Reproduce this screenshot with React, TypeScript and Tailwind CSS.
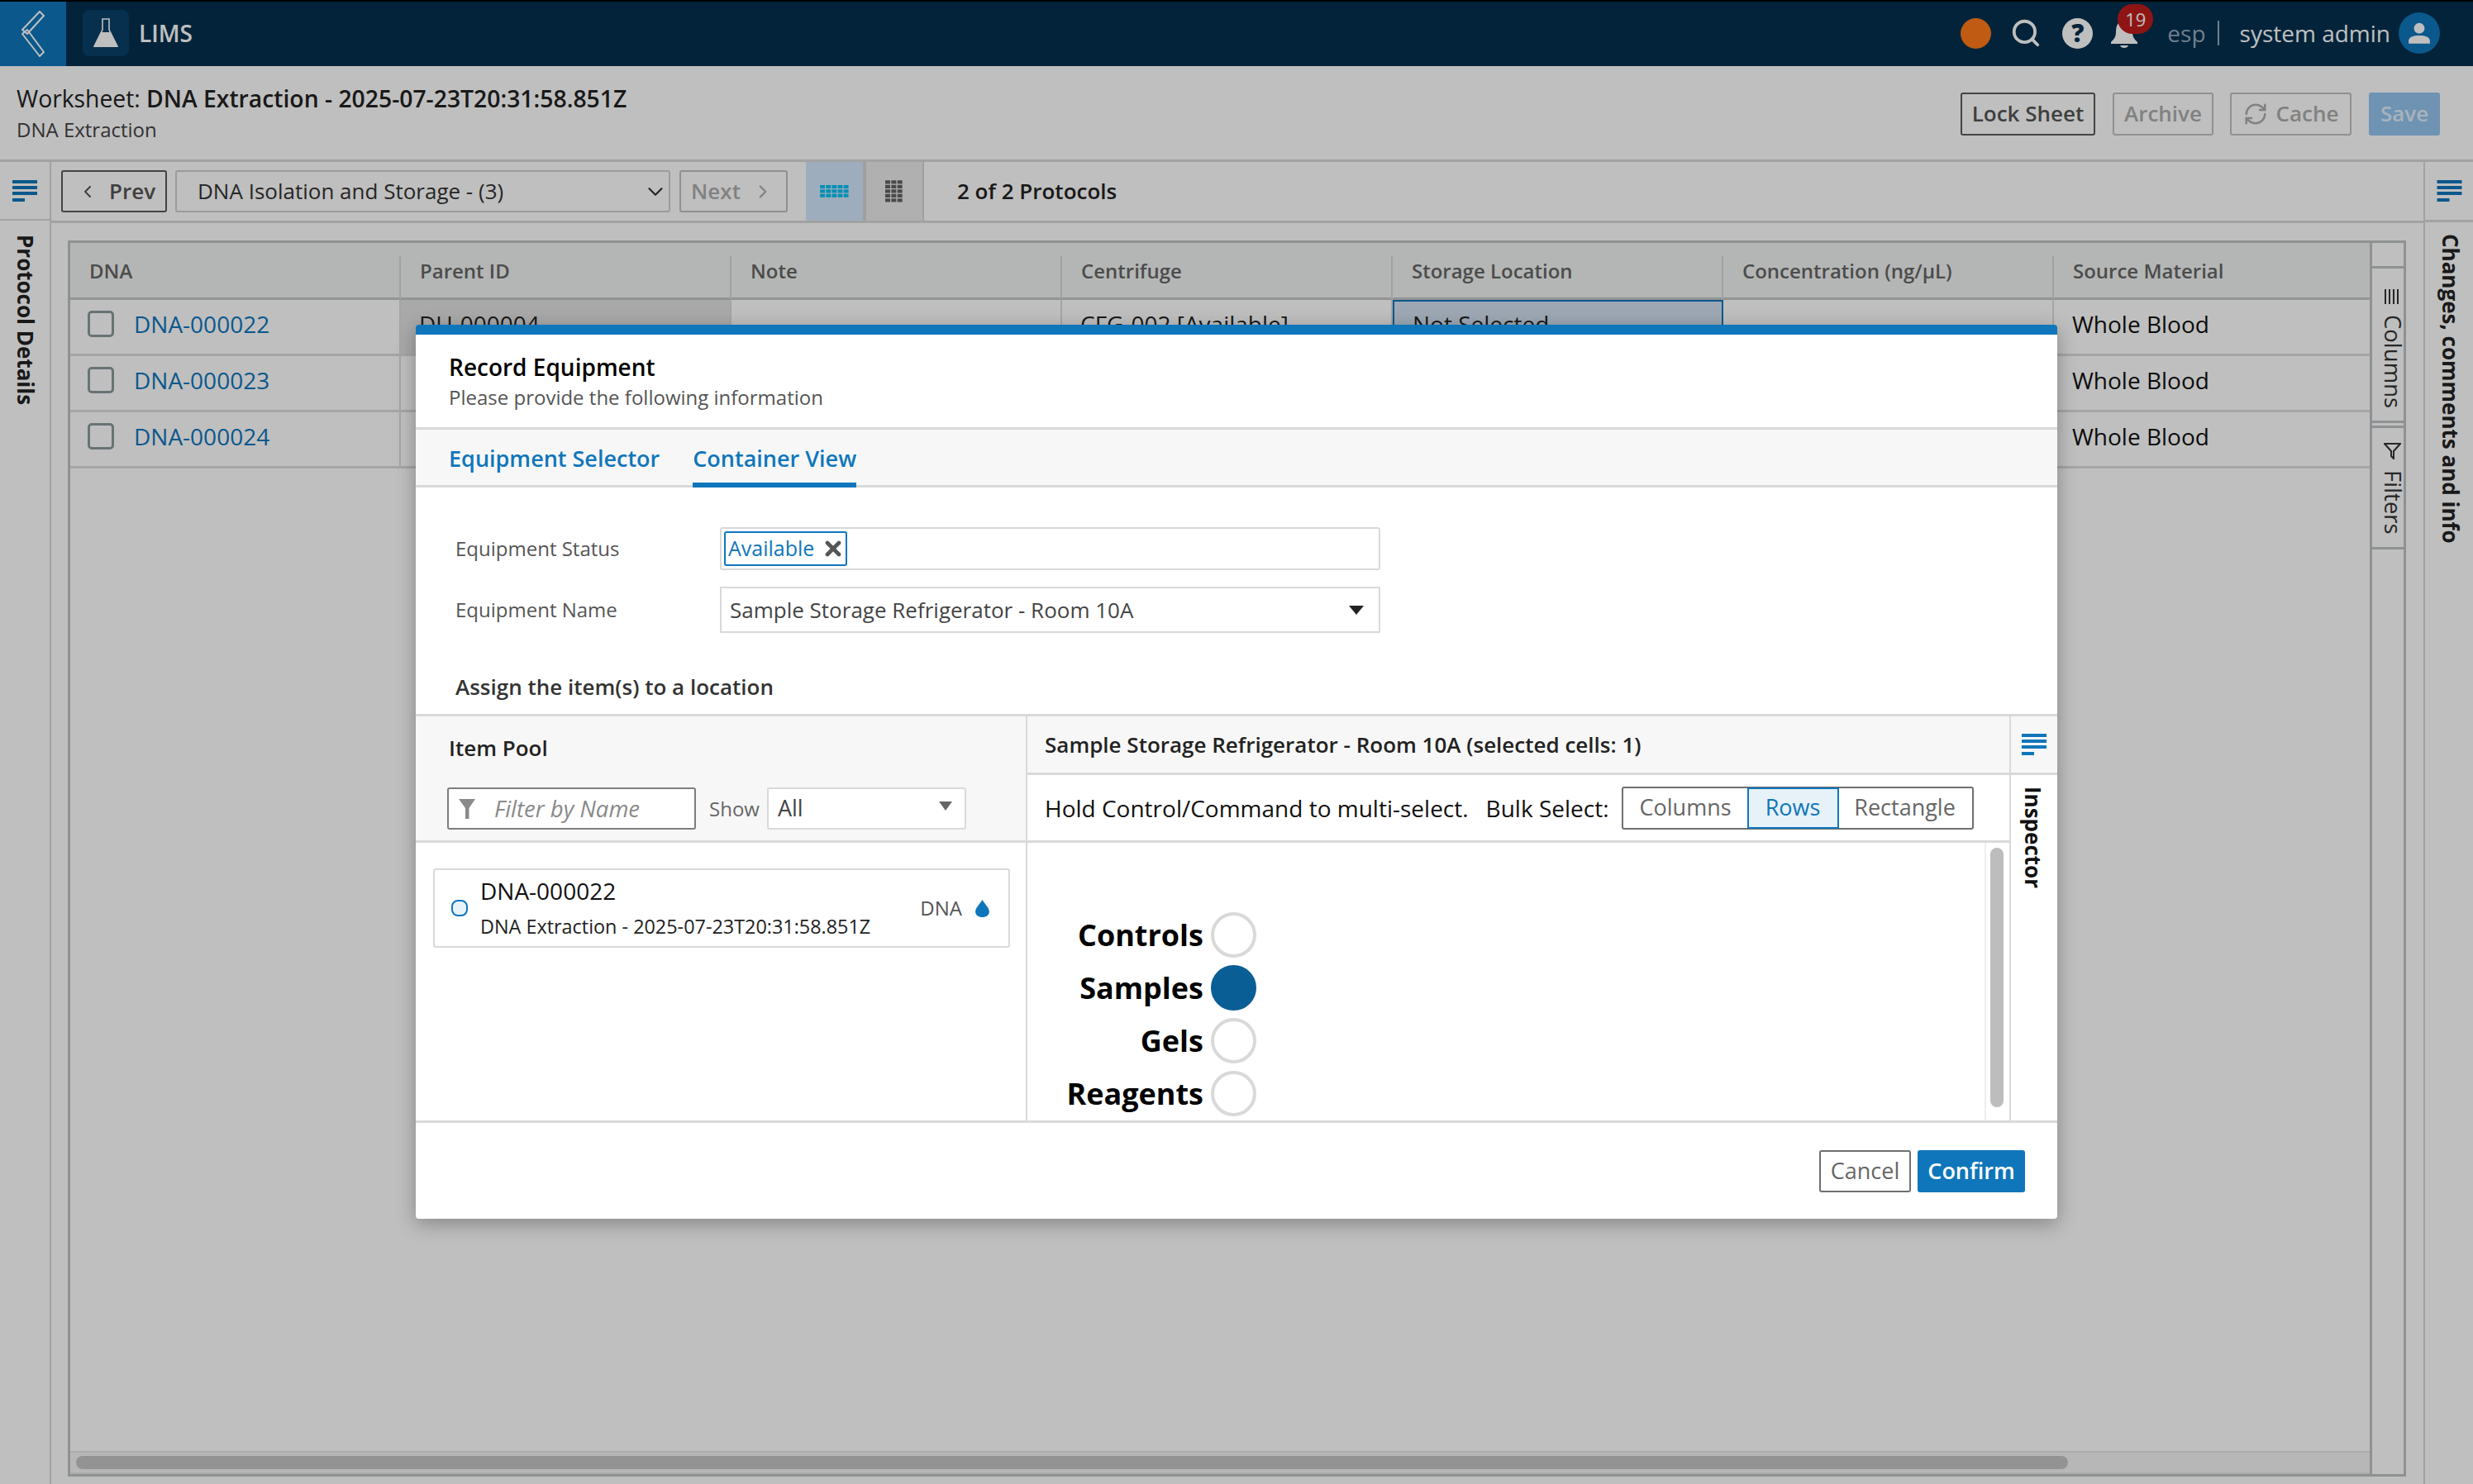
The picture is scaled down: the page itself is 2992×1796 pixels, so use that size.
import { ChevronDown, ChevronLeft, ChevronRight, RefreshCw, Search, X } from 'lucide-react';

const columns = ['DNA', 'Parent ID', 'Note', 'Centrifuge', 'Storage Location', 'Concentration (ng/µL)', 'Source Material'];
const rows = ['DNA-000022', 'DNA-000023', 'DNA-000024'];
const plates = [
  { label: 'Controls', on: false },
  { label: 'Samples', on: true },
  { label: 'Gels', on: false },
  { label: 'Reagents', on: false },
];

const MenuLines = ({ className }: { className: string }) => (
  <svg viewBox="0 0 30 26" className={className} fill="currentColor">
    <rect x="0" y="0" width="30" height="4" />
    <rect x="0" y="7" width="30" height="4" />
    <rect x="0" y="14" width="30" height="4" />
    <rect x="0" y="22" width="15" height="4" />
  </svg>
);

const DotGrid = ({ cols, rowCount, className }: { cols: number; rowCount: number; className: string }) => (
  <svg viewBox={`0 0 ${cols * 8} ${rowCount * 6}`} className={className} fill="currentColor">
    {Array.from({ length: cols * rowCount }).map((_, i) => (
      <rect key={i} x={(i % cols) * 8} y={Math.floor(i / cols) * 6} width="6.6" height="4.6" />
    ))}
  </svg>
);

const App = () => {
  return (
    <div className="relative w-[2992px] h-[1796px] overflow-hidden bg-white flex flex-col font-['Open_Sans',sans-serif] text-[27px] text-[#222]">
      {/* Top bar */}
      <div className="h-[80px] shrink-0 flex items-center bg-[#032f4d] border-t-2 border-black">
        <div className="w-[80px] h-full bg-[#0f76bb] flex items-center justify-center">
          <svg viewBox="0 0 30 56" className="w-[30px] h-[56px] mr-[3px]" fill="none" stroke="#fff" strokeWidth="2" strokeLinejoin="round">
            <path d="M24 1 L29 6 L9 28 L3 23 Z" />
            <path d="M3 28 L9 23 L29 50 L24 55 Z" />
          </svg>
        </div>
        <div className="ml-[20px] mb-[2px] w-[56px] h-[56px] rounded-[8px] bg-[#084069] flex items-center justify-center">
          <svg viewBox="0 0 30 36" className="w-[30px] h-[36px]">
            <path d="M11 1 H19 V14 L29 34 H1 L11 14 Z" fill="none" stroke="#fff" strokeWidth="1.6" />
            <path d="M9 17 H21 L29.5 35 H0.5 Z" fill="#fff" />
          </svg>
        </div>
        <span className="ml-[12px] mb-[2px] text-[28px] font-semibold text-white">LIMS</span>

        <div className="ml-auto mb-[2px] flex items-center pr-[40px]">
          <span className="w-[37px] h-[37px] rounded-full bg-[#ff7a18]" />
          <Search className="ml-[23px] w-[38px] h-[38px] text-white" strokeWidth={2.4} />
          <span className="ml-[25px] w-[37px] h-[37px] rounded-full bg-white flex items-center justify-center text-[30px] font-extrabold text-[#032f4d] leading-none">
            ?
          </span>
          <div className="relative ml-[21px] w-[34px] h-[36px] mt-[2px]">
            <svg viewBox="0 0 34 36" className="w-[34px] h-[36px]" fill="#fff">
              <path d="M17 2 C9 2 7 9 7 16 C7 22 4 25 1 28 V30 H33 V28 C30 25 27 22 27 16 C27 9 25 2 17 2 Z" />
              <path d="M12 32 H22 C21 36 13 36 12 32 Z" />
            </svg>
            <span className="absolute left-[9px] top-[-18px] w-[43px] h-[36px] rounded-full bg-[#bf1b1b] flex items-center justify-center text-[22px] text-white leading-none">
              19
            </span>
          </div>
          <span className="ml-[35px] text-[28px] text-[#94a9bb]">esp</span>
          <span className="ml-[14px] w-[2px] h-[30px] bg-[#94a9bb]" />
          <span className="ml-[25px] text-[28px] text-white">system admin</span>
          <span className="ml-[10px] w-[50px] h-[50px] rounded-full bg-[#0f76bb] flex items-center justify-center">
            <svg viewBox="0 0 24 24" className="w-[28px] h-[28px]" fill="#fff">
              <circle cx="12" cy="7" r="5.5" />
              <path d="M1 23 V20 C1 16 6 14.5 12 14.5 C18 14.5 23 16 23 20 V23 Z" />
            </svg>
          </span>
        </div>
      </div>

      {/* Worksheet header */}
      <div className="h-[116px] shrink-0 flex items-center justify-between pl-[20px] pr-[40px] pt-[2px] border-b-[3px] border-[#d8d8d8]">
        <div className="flex flex-col">
          <div className="text-[28.3px] leading-[37px] text-[#222]">
            Worksheet: <span className="font-semibold">DNA Extraction - 2025-07-23T20:31:58.851Z</span>
          </div>
          <div className="text-[24px] leading-[37px] text-[#444]">DNA Extraction</div>
        </div>
        <div className="flex items-center text-[26px] font-semibold">
          <button className="h-[52px] w-[163px] rounded-[3px] border-2 border-[#5b5b5b] text-[#555]">Lock Sheet</button>
          <button className="ml-[21px] h-[52px] w-[122px] rounded-[3px] border-2 border-[#c0c0c0] text-[#adadad]">Archive</button>
          <button className="ml-[20px] h-[52px] w-[147px] rounded-[3px] border-2 border-[#c0c0c0] text-[#adadad] flex items-center justify-center gap-[10px]">
            <RefreshCw className="w-[30px] h-[30px]" strokeWidth={2} />
            Cache
          </button>
          <button className="ml-[21px] h-[52px] w-[86px] rounded-[3px] bg-[#94c4ef] text-[#e0effb]">Save</button>
        </div>
      </div>

      <div className="flex-1 flex min-h-0">
        {/* Protocol details rail */}
        <div className="w-[62px] shrink-0 flex flex-col border-r-[2px] border-[#d8d8d8]">
          <div className="h-[71px] shrink-0 flex items-center justify-center border-b-[2px] border-[#d8d8d8]">
            <MenuLines className="w-[30px] h-[26px] text-[#0f76bb]" />
          </div>
          <div className="pt-[17px] pr-[12px] [writing-mode:vertical-rl] font-bold text-[26px] leading-[34px] text-[#222]">
            Protocol Details
          </div>
        </div>

        <div className="flex-1 min-w-0 flex flex-col">
          {/* Protocol toolbar */}
          <div className="h-[74px] shrink-0 flex items-stretch border-b-[3px] border-[#d8d8d8] pl-[12px]">
            <div className="flex items-center">
              <button className="h-[51px] w-[128px] rounded-[3px] border-2 border-[#5b5b5b] text-[#555] flex items-center pl-[18px] gap-[14px] font-semibold text-[26px]">
                <ChevronLeft className="w-[24px] h-[24px]" strokeWidth={2} />
                Prev
              </button>
              <div className="ml-[10px] h-[51px] w-[599px] rounded-[3px] border-2 border-[#cfcfcf] flex items-center justify-between pl-[25px] pr-[1px] text-[26px] text-[#333]">
                DNA Isolation and Storage - (3)
                <ChevronDown className="w-[30px] h-[30px]" strokeWidth={1.8} />
              </div>
              <button className="ml-[11px] h-[51px] w-[131px] rounded-[3px] border-2 border-[#c0c0c0] text-[#adadad] flex items-center pl-[12px] gap-[14px] font-semibold text-[26px]">
                Next
                <ChevronRight className="w-[26px] h-[26px]" strokeWidth={2} />
              </button>
            </div>
            <div className="ml-[22px] w-[69px] bg-[#d2e7fc] flex items-center justify-center">
              <DotGrid cols={5} rowCount={3} className="w-[38px] h-[16px] text-[#00c0f0]" />
            </div>
            <div className="w-[74px] bg-[#ebebeb] border-x-[4px] border-r-[2px] border-[#d5d5d5] flex items-center justify-center">
              <DotGrid cols={3} rowCount={5} className="w-[22px] h-[28px] text-[#636363]" />
            </div>
            <div className="ml-[40px] self-center font-semibold text-[26px] text-[#222]">2 of 2 Protocols</div>
          </div>

          {/* Table */}
          <div className="flex-1 min-h-0 pt-[21px] pl-[20px] pr-[21px] pb-[9px]">
            <div className="h-full flex border-[3px] border-[#bfc3c4]">
              <div className="flex-1 min-w-0 flex flex-col">
                <div className="h-[69px] shrink-0 grid grid-cols-[400px_400px_400px_400px_400px_400px_1fr] bg-[#f1f3f2] border-b-[3px] border-[#c3c6c6]">
                  {columns.map((col) => (
                    <div key={col} className="mt-[16px] pl-[23px] border-r-2 border-[#d6d8d8] last:border-r-0 flex items-center pb-[16px] text-[24px] font-semibold text-[#666]">
                      {col}
                    </div>
                  ))}
                </div>
                {rows.map((id, i) => (
                  <div key={id} className="h-[68px] shrink-0 grid grid-cols-[400px_400px_400px_400px_400px_400px_1fr] border-b-[3px] border-[#dcdcdc] text-[28px]">
                    <div className="flex items-center pl-[21px] pb-[8px] border-r-2 border-[#dcdcdc]">
                      <span className="w-[32px] h-[32px] rounded-[5px] border-[3px] border-[#8a9a9c]" />
                      <span className="ml-[24px] text-[#0f76bb]">{id}</span>
                    </div>
                    <div className={`pl-[22px] pb-[8px] flex items-center border-r-2 border-[#dcdcdc] ${i === 0 ? 'bg-[#e2e2e2]' : ''}`}>
                      {i === 0 ? 'DU-000004' : ''}
                    </div>
                    <div className="border-r-2 border-[#dcdcdc]" />
                    <div className="pl-[22px] pb-[8px] flex items-center border-r-2 border-[#dcdcdc]">{i === 0 ? 'CFG-002 [Available]' : ''}</div>
                    <div className={`pl-[22px] pb-[8px] flex items-center ${i === 0 ? 'bg-[#d2e0f0] border-2 border-[#0f76bb]' : 'border-r-2 border-[#dcdcdc]'}`}>
                      {i === 0 ? 'Not Selected' : ''}
                    </div>
                    <div className="border-r-2 border-[#dcdcdc]" />
                    <div className="pl-[22px] pb-[8px] flex items-center text-[#111]">Whole Blood</div>
                  </div>
                ))}
                <div className="flex-1" />
                <div className="h-[28px] shrink-0 bg-[#f5f5f5] border-t-2 border-[#e6e6e6] border-b-2 flex items-center pl-[7px]">
                  <div className="w-[2410px] h-[16px] rounded-full bg-[#c4c4c4]" />
                </div>
              </div>

              {/* Side tabs */}
              <div className="w-[41px] shrink-0 flex flex-col border-l-[3px] border-[#bfc3c4] text-[27.5px] text-[#333]">
                <div className="h-[31px] border-b-[3px] border-[#bfc3c4]" />
                <div className="h-[187px] border-b-[3px] border-[#bfc3c4] flex flex-col items-center pt-[25px] pl-[11px]">
                  <svg viewBox="0 0 21 18" className="w-[21px] h-[18px] shrink-0" stroke="currentColor" strokeWidth="2">
                    <path d="M2 0 V18 M7 0 V18 M12 0 V18 M17 0 V18" />
                  </svg>
                  <span className="mt-[13px] [writing-mode:vertical-rl] leading-[30px]">Columns</span>
                </div>
                <div className="mt-[3px] h-[150px] border-t-[3px] border-b-[3px] border-[#bfc3c4] flex flex-col items-center pt-[18px] pl-[11px]">
                  <svg viewBox="0 0 21 20" className="w-[21px] h-[20px] shrink-0" fill="none" stroke="currentColor" strokeWidth="2">
                    <path d="M1 1 H20 L12 10 V19 L9 16 V10 Z" />
                  </svg>
                  <span className="mt-[13px] [writing-mode:vertical-rl] leading-[30px]">Filters</span>
                </div>
              </div>
            </div>
          </div>
        </div>

        {/* Changes rail */}
        <div className="w-[60px] shrink-0 flex flex-col border-l-[2px] border-[#d8d8d8]">
          <div className="h-[73px] shrink-0 flex items-center justify-center border-b-[3px] border-[#d8d8d8]">
            <MenuLines className="w-[31px] h-[26px] text-[#0f76bb]" />
          </div>
          <div className="pt-[14px] pr-[10px] [writing-mode:vertical-rl] font-bold text-[26px] leading-[34px] text-[#222] whitespace-nowrap">
            Changes, comments and info
          </div>
        </div>
      </div>

      {/* Dim layer */}
      <div className="absolute inset-0 bg-black/25" />

      {/* Record Equipment modal */}
      <div className="absolute left-[503px] top-[393px] w-[1986px] h-[1082px] bg-white rounded-[4px] border-t-[12px] border-[#0f76bb] shadow-[0_6px_24px_rgba(0,0,0,0.3)] flex flex-col">
        <div className="h-[112px] shrink-0 pl-[40px] pt-[20px]">
          <div className="text-[28px] font-semibold leading-[38px] text-black">Record Equipment</div>
          <div className="text-[24px] leading-[35px] text-[#555]">Please provide the following information</div>
        </div>

        <div className="h-[73px] shrink-0 flex items-stretch gap-[40px] pl-[40px] bg-[#f7f7f7] border-y-[3px] border-[#d9d9d9] text-[27px] font-semibold text-[#0f76bb]">
          <div className="flex items-center pt-[3px]">Equipment Selector</div>
          <div className="flex items-center border-b-[6px] border-[#0f76bb] mb-[-3px] pt-[6px]">Container View</div>
        </div>

        <div className="h-[277px] shrink-0 pl-[48px] border-b-[3px] border-[#d9d9d9] text-[24px] text-[#555]">
          <div className="mt-[48px] flex items-center">
            <span className="w-[320px]">Equipment Status</span>
            <div className="w-[799px] h-[52px] rounded-[3px] border-2 border-[#d9d9d9] flex items-center pl-[3px]">
              <span className="h-[42px] w-[149px] rounded-[3px] border-2 border-[#0f76bb] flex items-center pl-[3px] text-[25px] text-[#0f76bb]">
                Available
                <X className="ml-[9px] w-[28px] h-[28px] text-[#555]" strokeWidth={4} />
              </span>
            </div>
          </div>
          <div className="mt-[20px] flex items-center">
            <span className="w-[320px]">Equipment Name</span>
            <div className="w-[799px] h-[56px] border-2 border-[#d9d9d9] flex items-center justify-between pl-[10px] pr-[18px] text-[26px] text-[#444]">
              Sample Storage Refrigerator - Room 10A
              <svg viewBox="0 0 20 12" className="w-[18px] h-[11px]" fill="#222">
                <path d="M0 0 H20 L10 12 Z" />
              </svg>
            </div>
          </div>
          <div className="pt-[48px] text-[26px] font-semibold leading-[34px] text-[#333]">Assign the item(s) to a location</div>
        </div>

        <div className="h-[492px] shrink-0 flex border-b-[3px] border-[#d9d9d9]">
          {/* Item pool */}
          <div className="w-[740px] shrink-0 border-r-[2px] border-[#d9d9d9] flex flex-col">
            <div className="h-[153px] shrink-0 bg-[#f7f7f7] border-b-[3px] border-[#d9d9d9] pl-[40px] pt-[20px]">
              <div className="text-[26px] font-semibold leading-[36px] text-[#222]">Item Pool</div>
              <div className="mt-[30px] ml-[-2px] flex items-center">
                <div className="w-[301px] h-[51px] bg-white rounded-[3px] border-2 border-[#7d7d7d] flex items-center pl-[12px]">
                  <svg viewBox="0 0 20 24" className="w-[20px] h-[24px]" fill="#8a8a8a">
                    <path d="M0 0 H20 L12.5 11 V24 H8 V11 Z" />
                  </svg>
                  <span className="ml-[23px] italic text-[27.5px] text-[#8a8a8a]">Filter by Name</span>
                </div>
                <span className="ml-[16px] text-[24px] text-[#666]">Show</span>
                <div className="ml-[9px] w-[241px] h-[51px] bg-white rounded-[3px] border-2 border-[#d9d9d9] flex items-center justify-between pl-[11px] pr-[15px] text-[27px] text-[#444]">
                  All
                  <svg viewBox="0 0 16 11" className="w-[16px] h-[11px] mb-[6px]" fill="#666">
                    <path d="M0 0 H16 L8 11 Z" />
                  </svg>
                </div>
              </div>
            </div>
            <div className="mt-[31px] ml-[21px] mr-[19px] h-[96px] rounded-[3px] border-2 border-[#d9d9d9] flex items-center pl-[20px] pr-[23px]">
              <span className="w-[20px] h-[20px] rounded-[8px] border-2 border-[#0f76bb] bg-[#e8f2f9]" />
              <div className="ml-[15px] flex flex-col gap-[6px]">
                <span className="text-[28px] leading-[38px] text-[#111]">DNA-000022</span>
                <span className="text-[23.4px] leading-[36px] text-[#222]">DNA Extraction - 2025-07-23T20:31:58.851Z</span>
              </div>
              <span className="ml-auto text-[24px] text-[#555]">DNA</span>
              <svg viewBox="0 0 16 20" className="ml-[16px] w-[17px] h-[21px]" fill="#0f76bb">
                <path d="M8 0 C10 4 16 9 16 13.5 C16 17.5 12.5 20 8 20 C3.5 20 0 17.5 0 13.5 C0 9 6 4 8 0 Z" />
              </svg>
            </div>
          </div>

          {/* Container view */}
          <div className="flex-1 min-w-0 flex flex-col">
            <div className="h-[71px] shrink-0 flex bg-[#f7f7f7] border-b-[3px] border-[#d9d9d9]">
              <div className="flex-1 flex items-center pl-[21px] text-[26px] font-semibold text-[#222]">
                Sample Storage Refrigerator - Room 10A (selected cells: 1)
              </div>
              <div className="w-[58px] border-l-2 border-[#d9d9d9] flex items-center justify-center">
                <MenuLines className="w-[30px] h-[26px] text-[#0f76bb]" />
              </div>
            </div>
            <div className="flex-1 min-h-0 flex">
              <div className="flex-1 min-w-0 flex flex-col">
                <div className="h-[82px] shrink-0 flex items-center pl-[21px] border-b-[3px] border-[#d9d9d9] text-[28px] text-[#111]">
                  Hold Control/Command to multi-select.
                  <span className="ml-[21px]">Bulk Select:</span>
                  <div className="ml-[15px] h-[52px] flex rounded-[3px] border-2 border-[#6f6f6f] text-[27px] text-[#666]">
                    <span className="w-[151px] flex items-center justify-center">Columns</span>
                    <span className="w-[109px] flex items-center justify-center bg-[#e6f1f8] text-[#0f76bb] outline-2 -outline-offset-1 outline-[#0f76bb]">Rows</span>
                    <span className="w-[162px] flex items-center justify-center">Rectangle</span>
                  </div>
                </div>
                <div className="flex-1 min-h-0 flex">
                  <div className="flex-1 pt-[84px] flex flex-col gap-[9px]">
                    {plates.map((p) => (
                      <div key={p.label} className="w-[277px] h-[55px] flex items-center justify-end gap-[9px]">
                        <span className="text-[36px] font-bold text-black">{p.label}</span>
                        <span className={`w-[55px] h-[55px] shrink-0 rounded-full border-[4px] ${p.on ? 'bg-[#0a5e96] border-[#0a5e96]' : 'border-[#d9d9d9]'}`} />
                      </div>
                    ))}
                  </div>
                  <div className="w-[30px] shrink-0 border-l-2 border-[#eeeeee] pt-[6px] pr-[3px] flex justify-center">
                    <div className="w-[16px] h-[314px] rounded-full bg-[#bdbdbd]" />
                  </div>
                </div>
              </div>
              <div className="w-[58px] shrink-0 border-l-2 border-[#d9d9d9] pt-[14px] pr-[13px] [writing-mode:vertical-rl] font-bold text-[26px] leading-[32px] text-[#111]">
                Inspector
              </div>
            </div>
          </div>
        </div>

        <div className="flex-1 flex items-center justify-end gap-[8px] pr-[39px] text-[27px]">
          <button className="w-[111px] h-[51px] rounded-[3px] border-2 border-[#6f6f6f] text-[#666]">Cancel</button>
          <button className="w-[130px] h-[51px] rounded-[3px] bg-[#0f76bb] font-semibold text-white">Confirm</button>
        </div>
      </div>
    </div>
  );
};

export default App;
